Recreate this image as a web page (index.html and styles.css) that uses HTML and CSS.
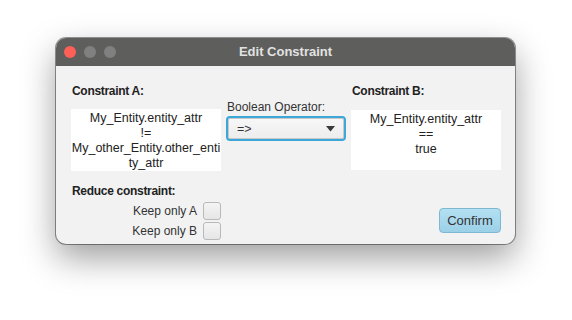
FILE: index.html
```html
<!DOCTYPE html>
<html>
<head>
<meta charset="utf-8">
<link rel="stylesheet" href="styles.css">
</head>
<body>
<div class="window">
  <div class="titlebar">
    <div class="lights">
      <span class="light red"></span>
      <span class="light gray"></span>
      <span class="light gray"></span>
    </div>
    <div class="title">Edit Constraint</div>
  </div>
  <div class="content">
    <div class="grid">
      <div class="label bold la">Constraint A:</div>
      <div class="label bold lb">Constraint B:</div>
      <div class="box boxa">My_Entity.entity_attr<br>!=<br>My_other_Entity.other_enti<br>ty_attr</div>
      <div class="middle">
        <div class="label">Boolean Operator:</div>
        <div class="combo">
          <span class="combo-text">=&gt;</span>
          <svg class="arrow" width="9" height="6" viewBox="0 0 9 6"><path d="M0 0 L9 0 L4.5 5.5 Z" fill="#3a3a3a"/></svg>
        </div>
      </div>
      <div class="box boxb">My_Entity.entity_attr<br>==<br>true</div>
    </div>
    <div class="bottom">
      <div class="reduce">
        <div class="label bold">Reduce constraint:</div>
        <div class="checkrow"><span class="label">Keep only A</span><span class="check"></span></div>
        <div class="checkrow"><span class="label">Keep only B</span><span class="check"></span></div>
      </div>
      <button class="confirm">Confirm</button>
    </div>
  </div>
</div>
</body>
</html>
```
FILE: styles.css
```css
html, body {
  margin: 0;
  padding: 0;
  background: #ffffff;
}
body {
  width: 572px;
  height: 320px;
  font-family: "Liberation Sans", Arial, sans-serif;
  font-size: 12.5px;
  color: #333;
  overflow: hidden;
}
.window {
  margin: 38px 0 0 56px;
  width: 459px;
  height: 206px;
  border-radius: 10px;
  overflow: hidden;
  background: #f2f2f2;
  box-shadow: 0 0 0 1px rgba(0,0,0,0.4), 0 14px 34px rgba(0,0,0,0.38);
}
.titlebar {
  height: 28px;
  background: #5e5e5c;
  display: flex;
  align-items: center;
  position: relative;
}
.lights {
  display: flex;
  gap: 8px;
  padding-left: 8px;
}
.light {
  width: 12px;
  height: 12px;
  border-radius: 50%;
}
.red { background: #fe5f57; }
.gray { background: #808080; }
.title {
  position: absolute;
  left: 0;
  right: 0;
  top: 0;
  line-height: 28px;
  text-align: center;
  font-weight: bold;
  font-size: 13px;
  color: #e2e2e2;
}
.content {
  padding: 17px 14px 0 15px;
}
.grid {
  display: grid;
  grid-template-columns: 150px 120px 150px;
  grid-template-rows: 16px 62px;
  column-gap: 5px;
  row-gap: 10px;
  align-items: center;
}
.label {
  line-height: 16px;
  white-space: nowrap;
}
.bold {
  font-weight: bold;
  font-size: 12px;
  letter-spacing: -0.3px;
  color: #222;
}
.la { grid-column: 1; grid-row: 1; padding-left: 1px; }
.lb { grid-column: 3; grid-row: 1; padding-left: 1px; }
.box {
  background: #fff;
  text-align: center;
  line-height: 15px;
  color: #222;
  white-space: nowrap;
}
.boxa {
  grid-column: 1; grid-row: 2;
  height: 62px;
  padding-top: 2px;
  box-sizing: border-box;
}
.boxb {
  grid-column: 3; grid-row: 2;
  height: 60px;
  padding-top: 2px;
  box-sizing: border-box;
}
.middle {
  grid-column: 2;
  grid-row: 1 / 3;
  align-self: start;
  margin-top: 16px;
  display: flex;
  flex-direction: column;
  gap: 1px;
}
.middle .label { padding-left: 1px; font-size: 12px; }
.combo {
  height: 25px;
  box-sizing: border-box;
  border: 2px solid #3ea7da;
  border-radius: 4px;
  background: linear-gradient(#f8f8f8, #ececec);
  box-shadow: inset 0 0 0 1px #c8c8c8;
  display: flex;
  align-items: center;
  justify-content: space-between;
  padding: 0 9px 0 9px;
}
.combo-text { color: #333; }
.bottom {
  margin-top: 12px;
  display: flex;
  justify-content: space-between;
  align-items: flex-end;
}
.reduce {
  width: 150px;
  display: flex;
  flex-direction: column;
}
.reduce > .label { padding-left: 1px; margin-bottom: 2px; }
.checkrow {
  display: flex;
  justify-content: flex-end;
  align-items: center;
  gap: 6px;
  height: 20px;
}
.checkrow .label { font-size: 12px; }
.check {
  width: 16px;
  height: 16px;
  border: 1px solid #b9b9b9;
  border-radius: 3px;
  background: linear-gradient(#f4f4f4, #e6e6e6);
}
.confirm {
  width: 62px;
  height: 25px;
  margin-bottom: 8px;
  margin-right: 0;
  font-family: "Liberation Sans", Arial, sans-serif;
  font-size: 13px;
  color: #333;
  border: 1px solid #7db7d1;
  border-radius: 4px;
  background: linear-gradient(#b4e0f2, #9bd0e8);
  padding: 0;
}
```
